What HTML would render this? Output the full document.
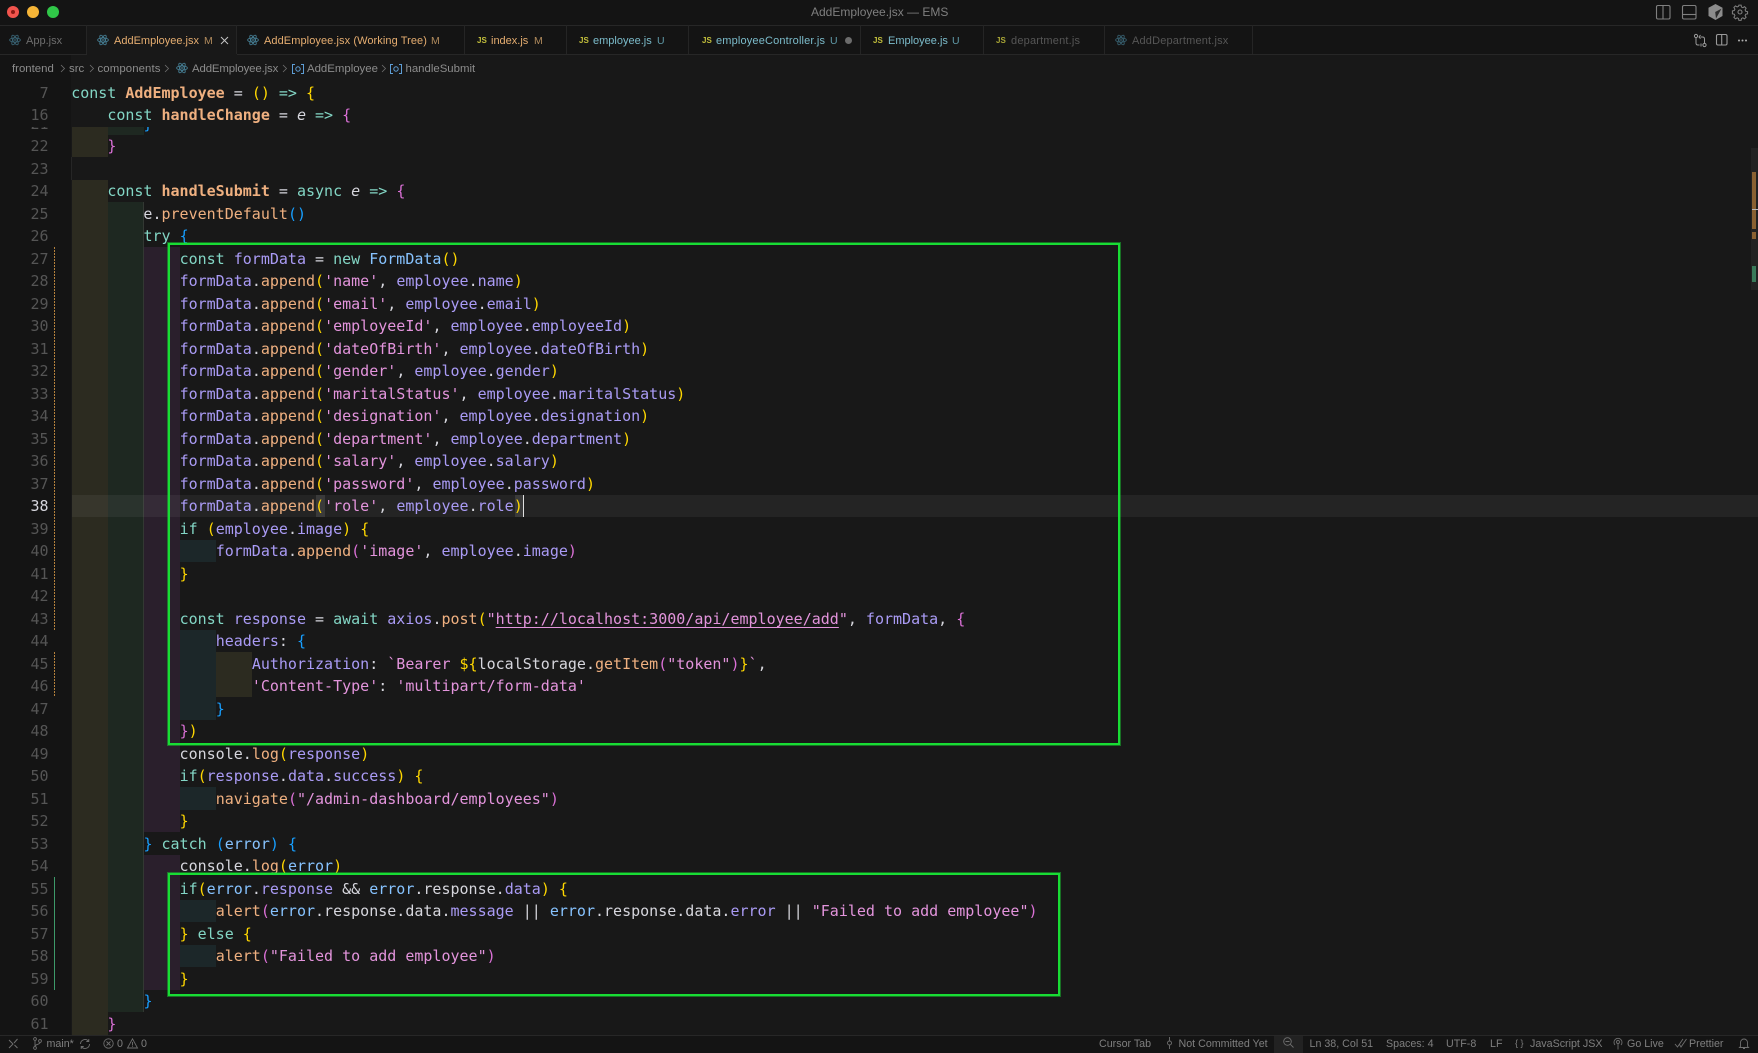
<!DOCTYPE html>
<html><head><meta charset="utf-8"><title>AddEmployee.jsx — EMS</title>
<style>
html,body{margin:0;padding:0;background:#181818;width:1758px;height:1053px;overflow:hidden}
#a{position:relative;width:1758px;height:1053px;overflow:hidden;background:#181818;font-family:"Liberation Sans",sans-serif;filter:blur(.3px)}
.r{position:absolute}
.u{position:absolute;white-space:pre;font-family:"Liberation Sans",sans-serif}
pre{margin:0;position:absolute;font-family:"DejaVu Sans Mono","Liberation Mono",monospace;font-size:15px;line-height:22.5px;color:#d6d6dd}
.k{color:#83d6c5}.f{color:#efb080}.g{color:#efb080;font-weight:700}.s{color:#e394dc}.v{color:#aa9bf5}.t{color:#87c3ff}.y{color:#ffd700}.p{color:#da70d6}.b{color:#179fff}.i{font-style:italic}
.tab{font-size:11px;top:34px;line-height:14px}
.o{color:#e5ad70}.c{color:#7cbccb}.d{color:#565656}.h{color:#6e6e6e}
.js{position:absolute;top:35px;font-size:8px;line-height:11px;font-weight:700;color:#c4c03c}
.bc{font-size:11.4px;top:62px;line-height:14px;color:#8c8c8c}
.st{font-size:10.7px;top:1037px;line-height:14px;color:#7f7f7f}
.sep{position:absolute;top:25px;width:1px;height:29px;background:#252525}
svg{position:absolute;overflow:visible}
</style></head><body><div id="a">

<!-- chrome -->
<div class="r" style="left:0;top:0;width:1758px;height:54px;background:#141414"></div>
<div class="r" style="left:0;top:25px;width:1758px;height:1px;background:#272727"></div>
<div class="r" style="left:0;top:54px;width:1758px;height:1px;background:#272727"></div>
<div class="r" style="left:87px;top:26px;width:150px;height:29px;background:#181818"></div>
<div class="sep" style="left:86px"></div><div class="sep" style="left:236px"></div><div class="sep" style="left:464px"></div><div class="sep" style="left:566px"></div><div class="sep" style="left:688px"></div><div class="sep" style="left:860px"></div><div class="sep" style="left:983px"></div><div class="sep" style="left:1104px"></div><div class="sep" style="left:1252px"></div>

<!-- traffic lights -->
<div class="r" style="left:7px;top:6px;width:12px;height:12px;border-radius:50%;background:#f2544d"></div>
<div class="r" style="left:11px;top:10px;width:4px;height:4px;border-radius:50%;background:#8c1a14"></div>
<div class="r" style="left:27px;top:6px;width:12px;height:12px;border-radius:50%;background:#f6b537"></div>
<div class="r" style="left:47px;top:6px;width:12px;height:12px;border-radius:50%;background:#30c748"></div>

<div class="u" style="left:811px;top:5px;font-size:12px;line-height:14px;color:#7f7f7f">AddEmployee.jsx — EMS</div>

<!-- title icons -->
<svg style="left:1656px;top:5px" width="15" height="15" fill="none" stroke="#808080" stroke-width="1.1"><rect x=".5" y=".5" width="13.5" height="13.5" rx="1.5"/><path d="M7 .5V14"/></svg>
<svg style="left:1682px;top:5px" width="15" height="15" fill="none" stroke="#808080" stroke-width="1.1"><rect x=".5" y=".5" width="13.5" height="13.5" rx="1.5"/><path d="M.5 9.5H14"/></svg>
<svg style="left:1708px;top:4px" width="15" height="16"><path d="M7.5 0L14.5 3.8V12L7.5 16L.5 12V3.8Z" fill="#8c8c8c"/><path d="M13.5 4.6L7.2 8L8 14.5Z" fill="#2c2c2c"/></svg>
<svg style="left:1732px;top:4px" width="16" height="16" viewBox="0 0 16 16" fill="none" stroke="#808080" stroke-width="1.1"><circle cx="8" cy="8" r="2"/><path d="M6.8 .6h2.4l.4 2 1.5.7 1.8-1.1 1.7 1.7-1.1 1.8.7 1.5 2 .4v2.4l-2 .4-.7 1.5 1.1 1.8-1.7 1.7-1.8-1.1-1.5.7-.4 2H6.8l-.4-2-1.5-.7-1.8 1.1-1.7-1.7 1.1-1.8-.7-1.5-2-.4V6.8l2-.4.7-1.5-1.1-1.8 1.7-1.7 1.8 1.1 1.5-.7z" transform="translate(.6 .6) scale(.925)"/></svg>

<!-- editor actions -->
<svg style="left:1694px;top:34px" width="13" height="14" fill="none" stroke="#9a9a9a" stroke-width="1"><circle cx="2" cy="2" r="1.6"/><circle cx="10.5" cy="11" r="1.6"/><path d="M2 3.6V9c0 1.5.8 2 2 2h1.5M10.5 9.4V5c0-1.5-.8-2-2-2H6.5M6.5 1L5 3l1.5 1.6M7 9.5V12.5"/></svg>
<svg style="left:1716px;top:34px" width="12" height="12" fill="none" stroke="#9a9a9a" stroke-width="1.1"><rect x=".5" y=".5" width="10.5" height="10.5" rx="1.5"/><path d="M5.7.5V11"/></svg>
<svg style="left:1738px;top:39px" width="10" height="3" fill="#b0b0b0"><circle cx="1" cy="1.5" r="1"/><circle cx="4.5" cy="1.5" r="1"/><circle cx="8" cy="1.5" r="1"/></svg>

<svg width="0" height="0" style="position:absolute"><defs><g id="at" fill="none" stroke="#467f95" stroke-width=".85"><ellipse cx="6" cy="6" rx="5.4" ry="2.1"/><ellipse cx="6" cy="6" rx="5.4" ry="2.1" transform="rotate(60 6 6)"/><ellipse cx="6" cy="6" rx="5.4" ry="2.1" transform="rotate(120 6 6)"/><circle cx="6" cy="6" r=".9" fill="#467f95" stroke="none"/></g></defs></svg>

<!-- tabs -->
<svg style="left:9px;top:34px" width="12" height="12" opacity=".75"><use href="#at"/></svg>
<div class="u tab h" style="left:26px">App.jsx</div>
<svg style="left:97px;top:34px" width="12" height="12"><use href="#at"/></svg>
<div class="u tab o" style="left:114px">AddEmployee.jsx</div><div class="u tab" style="left:204px;font-size:10.5px;color:#b08a5c">M</div>
<svg style="left:220px;top:36px" width="9" height="9" fill="none" stroke="#c4c4c4" stroke-width="1"><path d="M1 1L8 8M8 1L1 8"/></svg>
<svg style="left:247px;top:34px" width="12" height="12"><use href="#at"/></svg>
<div class="u tab o" style="left:264px;letter-spacing:.08px">AddEmployee.jsx (Working Tree)</div><div class="u tab" style="left:431px;font-size:10.5px;color:#b08a5c">M</div>
<div class="js" style="left:477px">JS</div>
<div class="u tab o" style="left:491px">index.js</div><div class="u tab" style="left:534px;font-size:10.5px;color:#b08a5c">M</div>
<div class="js" style="left:579px">JS</div>
<div class="u tab c" style="left:593px">employee.js</div><div class="u tab" style="left:657px;font-size:10.5px;color:#5f9aa8">U</div>
<div class="js" style="left:702px">JS</div>
<div class="u tab c" style="left:716px;letter-spacing:.16px">employeeController.js</div><div class="u tab" style="left:830px;font-size:10.5px;color:#5f9aa8">U</div>
<div class="r" style="left:845px;top:37px;width:7px;height:7px;border-radius:50%;background:#6c6c6c"></div>
<div class="js" style="left:873px">JS</div>
<div class="u tab c" style="left:888px">Employee.js</div><div class="u tab" style="left:952px;font-size:10.5px;color:#5f9aa8">U</div>
<div class="js" style="left:996px;opacity:.85">JS</div>
<div class="u tab d" style="left:1011px;letter-spacing:.2px">department.js</div>
<svg style="left:1115px;top:34px" width="12" height="12" opacity=".7"><use href="#at"/></svg>
<div class="u tab d" style="left:1132px;letter-spacing:.17px">AddDepartment.jsx</div>

<!-- editor bgs -->
<div class="r" style="left:0;top:55px;width:71px;height:980px;background:#141414"></div>
<div class="r" style="left:71.5px;top:126px;width:36px;height:31.25px;background:#2c2b20"></div>
<div class="r" style="left:71.5px;top:179.75px;width:36px;height:855px;background:#2c2b20"></div>
<div class="r" style="left:107.5px;top:126px;width:36px;height:8.75px;background:#1e2821"></div>
<div class="r" style="left:107.5px;top:202.25px;width:36px;height:810px;background:#1e2821"></div>
<div class="r" style="left:143.5px;top:247.25px;width:36px;height:585px;background:#2a1f2c"></div>
<div class="r" style="left:143.5px;top:854.75px;width:36px;height:135px;background:#2a1f2c"></div>
<div class="r" style="left:179.5px;top:539.75px;width:36px;height:22.5px;background:#1c2729"></div>
<div class="r" style="left:179.5px;top:629.75px;width:36px;height:90px;background:#1c2729"></div>
<div class="r" style="left:179.5px;top:787.25px;width:36px;height:22.5px;background:#1c2729"></div>
<div class="r" style="left:179.5px;top:899.75px;width:36px;height:22.5px;background:#1c2729"></div>
<div class="r" style="left:179.5px;top:944.75px;width:36px;height:22.5px;background:#1c2729"></div>
<div class="r" style="left:215.5px;top:652.25px;width:36px;height:45px;background:#2c2b20"></div>
<div class="r" style="left:71px;top:157px;width:1px;height:23px;background:#262626"></div>
<div class="r" style="left:143px;top:202.25px;width:1px;height:810px;background:#333833"></div>

<!-- current line -->
<div class="r" style="left:71.5px;top:494.75px;width:1687px;height:22.5px;background:rgba(255,255,255,.055)"></div>
<div class="r" style="left:315.5px;top:494.75px;width:9px;height:22.5px;background:#3a3a3a"></div>
<div class="r" style="left:514.5px;top:494.75px;width:9px;height:22.5px;background:#3a3a3a"></div>

<!-- git gutter -->
<div class="r" style="left:53.5px;top:247.25px;width:1px;height:382.5px;background:repeating-linear-gradient(#b5813c 0 2px,transparent 2px 3px)"></div>
<div class="r" style="left:53.5px;top:652.25px;width:1px;height:45px;background:repeating-linear-gradient(#b5813c 0 2px,transparent 2px 3px)"></div>
<div class="r" style="left:53.5px;top:877.25px;width:1.5px;height:112.5px;background:#3d9a6a"></div>

<!-- line numbers -->
<pre style="left:0;width:48.6px;top:112.65px;text-align:right;color:#555">21
22
23
24
25
26
27
28
29
30
31
32
33
34
35
36
37
<span style="color:#d6d6dd">38</span>
39
40
41
42
43
44
45
46
47
48
49
50
51
52
53
54
55
56
57
58
59
60
61</pre>

<!-- code -->
<pre style="left:71.2px;top:112.65px">        <span class="b">}</span>
    <span class="p">}</span>

    <span class="k">const</span> <span class="g">handleSubmit</span> = <span class="k">async</span> <span class="i">e</span> <span class="k">=&gt;</span> <span class="p">{</span>
        e.<span class="f">preventDefault</span><span class="b">()</span>
        <span class="k">try</span> <span class="b">{</span>
            <span class="k">const</span> <span class="v">formData</span> = <span class="k">new</span> <span class="t">FormData</span><span class="y">()</span>
            <span class="v">formData</span>.<span class="f">append</span><span class="y">(</span><span class="s">'name'</span>, <span class="v">employee</span>.<span class="v">name</span><span class="y">)</span>
            <span class="v">formData</span>.<span class="f">append</span><span class="y">(</span><span class="s">'email'</span>, <span class="v">employee</span>.<span class="v">email</span><span class="y">)</span>
            <span class="v">formData</span>.<span class="f">append</span><span class="y">(</span><span class="s">'employeeId'</span>, <span class="v">employee</span>.<span class="v">employeeId</span><span class="y">)</span>
            <span class="v">formData</span>.<span class="f">append</span><span class="y">(</span><span class="s">'dateOfBirth'</span>, <span class="v">employee</span>.<span class="v">dateOfBirth</span><span class="y">)</span>
            <span class="v">formData</span>.<span class="f">append</span><span class="y">(</span><span class="s">'gender'</span>, <span class="v">employee</span>.<span class="v">gender</span><span class="y">)</span>
            <span class="v">formData</span>.<span class="f">append</span><span class="y">(</span><span class="s">'maritalStatus'</span>, <span class="v">employee</span>.<span class="v">maritalStatus</span><span class="y">)</span>
            <span class="v">formData</span>.<span class="f">append</span><span class="y">(</span><span class="s">'designation'</span>, <span class="v">employee</span>.<span class="v">designation</span><span class="y">)</span>
            <span class="v">formData</span>.<span class="f">append</span><span class="y">(</span><span class="s">'department'</span>, <span class="v">employee</span>.<span class="v">department</span><span class="y">)</span>
            <span class="v">formData</span>.<span class="f">append</span><span class="y">(</span><span class="s">'salary'</span>, <span class="v">employee</span>.<span class="v">salary</span><span class="y">)</span>
            <span class="v">formData</span>.<span class="f">append</span><span class="y">(</span><span class="s">'password'</span>, <span class="v">employee</span>.<span class="v">password</span><span class="y">)</span>
            <span class="v">formData</span>.<span class="f">append</span><span class="y">(</span><span class="s">'role'</span>, <span class="v">employee</span>.<span class="v">role</span><span class="y">)</span>
            <span class="k">if</span> <span class="y">(</span><span class="v">employee</span>.<span class="v">image</span><span class="y">)</span> <span class="y">{</span>
                <span class="v">formData</span>.<span class="f">append</span><span class="p">(</span><span class="s">'image'</span>, <span class="v">employee</span>.<span class="v">image</span><span class="p">)</span>
            <span class="y">}</span>

            <span class="k">const</span> <span class="v">response</span> = <span class="k">await</span> <span class="v">axios</span>.<span class="f">post</span><span class="y">(</span><span class="s">"<span style="text-decoration:underline;text-underline-offset:3px">http://localhost:3000/api/employee/add</span>"</span>, <span class="v">formData</span>, <span class="p">{</span>
                <span class="v">headers</span>: <span class="b">{</span>
                    <span class="v">Authorization</span>: <span class="s">`Bearer </span><span class="y">${</span>localStorage.<span class="f">getItem</span><span class="p">(</span><span class="s">"token"</span><span class="p">)</span><span class="y">}</span><span class="s">`</span>,
                    <span class="s">'Content-Type'</span>: <span class="s">'multipart/form-data'</span>
                <span class="b">}</span>
            <span class="p">}</span><span class="y">)</span>
            console.<span class="f">log</span><span class="y">(</span><span class="v">response</span><span class="y">)</span>
            <span class="k">if</span><span class="y">(</span><span class="v">response</span>.<span class="v">data</span>.<span class="v">success</span><span class="y">)</span> <span class="y">{</span>
                <span class="f">navigate</span><span class="p">(</span><span class="s">"/admin-dashboard/employees"</span><span class="p">)</span>
            <span class="y">}</span>
        <span class="b">}</span> <span class="k">catch</span> <span class="b">(</span><span class="t">error</span><span class="b">)</span> <span class="b">{</span>
            console.<span class="f">log</span><span class="y">(</span><span class="t">error</span><span class="y">)</span>
            <span class="k">if</span><span class="y">(</span><span class="t">error</span>.<span class="v">response</span> &amp;&amp; <span class="t">error</span>.response.<span class="v">data</span><span class="y">)</span> <span class="y">{</span>
                <span class="f">alert</span><span class="p">(</span><span class="t">error</span>.response.data.<span class="v">message</span> || <span class="t">error</span>.response.data.<span class="v">error</span> || <span class="s">"Failed to add employee"</span><span class="p">)</span>
            <span class="y">}</span> <span class="k">else</span> <span class="y">{</span>
                <span class="f">alert</span><span class="p">(</span><span class="s">"Failed to add employee"</span><span class="p">)</span>
            <span class="y">}</span>
        <span class="b">}</span>
    <span class="p">}</span></pre>

<!-- cursor -->
<div class="r" style="left:523px;top:495px;width:1px;height:22px;background:#e0e0e0"></div>

<!-- sticky -->
<div class="r" style="left:0;top:55px;width:71px;height:71.5px;background:#141414"></div>
<div class="r" style="left:71px;top:55px;width:1687px;height:71.5px;background:#181818"></div>
<pre style="left:0;width:48.6px;top:81.5px;text-align:right;color:#555;line-height:22.4px">7
16</pre>
<pre style="left:71.2px;top:81.5px;line-height:22.4px"><span class="k">const</span> <span class="g">AddEmployee</span> = <span class="y">()</span> <span class="k">=&gt;</span> <span class="y">{</span>
    <span class="k">const</span> <span class="g">handleChange</span> = <span class="i">e</span> <span class="k">=&gt;</span> <span class="p">{</span></pre>

<!-- breadcrumb -->
<div class="u bc" style="left:12px">frontend</div><div class="u bc" style="left:69px">src</div><div class="u bc" style="left:97.5px;letter-spacing:.1px">components</div>
<svg style="left:176px;top:62px" width="12" height="12"><use href="#at"/></svg>
<div class="u bc" style="left:192px;letter-spacing:-.12px">AddEmployee.jsx</div><div class="u bc" style="left:307px">AddEmployee</div><div class="u bc" style="left:405.5px">handleSubmit</div>
<svg style="left:61px;top:65px" width="430" height="8" fill="none" stroke="#707070" stroke-width=".8"><path d="M0 0L3.5 3.5L0 7M29 0L32.5 3.5L29 7M104 0L107.5 3.5L104 7M222 0L225.5 3.5L222 7M321 0L324.5 3.5L321 7"/></svg>
<svg style="left:292px;top:64px" width="12" height="10" fill="none" stroke="#5e9ed6" stroke-width="1"><path d="M3 .5H.5V9.5H3M9 .5H11.5V9.5H9"/><circle cx="6" cy="5" r="2.2"/></svg>
<svg style="left:390px;top:64px" width="12" height="10" fill="none" stroke="#5e9ed6" stroke-width="1"><path d="M3 .5H.5V9.5H3M9 .5H11.5V9.5H9"/><circle cx="6" cy="5" r="2.2"/></svg>

<!-- green boxes -->
<div class="r" style="box-sizing:border-box;left:168px;top:243px;width:952px;height:502px;border:2px solid #18dc34;box-shadow:0 0 0 1px rgba(24,220,52,.45)"></div>
<div class="r" style="box-sizing:border-box;left:168px;top:873px;width:892px;height:123px;border:2px solid #18dc34;box-shadow:0 0 0 1px rgba(24,220,52,.45)"></div>

<!-- overview ruler -->
<div class="r" style="left:1751px;top:148px;width:7px;height:142px;background:#222"></div>
<div class="r" style="left:1752px;top:172px;width:3.5px;height:57px;background:#8a6132"></div>
<div class="r" style="left:1752px;top:232px;width:3.5px;height:7px;background:#8a6132"></div>
<div class="r" style="left:1752px;top:266px;width:3.5px;height:16px;background:#3a7a5a"></div>
<div class="r" style="left:1752px;top:209px;width:6px;height:1px;background:#bbb"></div>

<!-- status bar -->
<div class="r" style="left:0;top:1035px;width:1758px;height:18px;background:#141414;border-top:1px solid #272727;box-sizing:border-box"></div>
<div class="r" style="left:1274px;top:1036px;width:29px;height:17px;background:#222"></div>
<svg style="left:9px;top:1039px" width="9" height="10" fill="none" stroke="#6f6f6f" stroke-width="1"><path d="M0 9L4 5L0 1M8.5 0L5 4M5.5 6L8.5 9"/></svg>
<svg style="left:33px;top:1037px" width="9" height="13" fill="none" stroke="#6f6f6f" stroke-width=".9"><circle cx="2" cy="2" r="1.4"/><circle cx="2" cy="11" r="1.4"/><circle cx="7" cy="4" r="1.4"/><path d="M2 3.5V9.5M7 5.5C7 7.5 3 7 2 9"/></svg>
<div class="u st" style="left:46.5px">main*</div>
<svg style="left:79px;top:1038px" width="12" height="12" fill="none" stroke="#6f6f6f" stroke-width=".9"><path d="M1.5 6a4.5 4.5 0 0 1 8-2.8M10.5 6a4.5 4.5 0 0 1-8 2.8M9.8 1V3.5H7.3M2.2 11V8.5H4.7"/></svg>
<svg style="left:103px;top:1038px" width="11" height="11" fill="none" stroke="#6f6f6f" stroke-width=".9"><circle cx="5.5" cy="5.5" r="4.7"/><path d="M3.5 3.5L7.5 7.5M7.5 3.5L3.5 7.5"/></svg>
<div class="u st" style="left:117px">0</div>
<svg style="left:127px;top:1038px" width="11" height="11" fill="none" stroke="#6f6f6f" stroke-width=".9"><path d="M5.5 .8L10.5 10H.5ZM5.5 4V7.5M5.5 8.3V9"/></svg>
<div class="u st" style="left:141px">0</div>
<div class="u st" style="left:1099px">Cursor Tab</div>
<svg style="left:1166px;top:1037px" width="7" height="13" fill="none" stroke="#6f6f6f" stroke-width=".9"><circle cx="3.5" cy="6" r="2"/><path d="M3.5 0V4M3.5 8V12"/></svg>
<div class="u st" style="left:1178.5px">Not Committed Yet</div>
<svg style="left:1283px;top:1037px" width="11" height="11" fill="none" stroke="#6f6f6f" stroke-width=".9"><circle cx="4.5" cy="4.5" r="3.8"/><path d="M7.3 7.3L10.5 10.5M2.5 4.5H6.5"/></svg>
<div class="u st" style="left:1309.5px">Ln 38, Col 51</div>
<div class="u st" style="left:1386px">Spaces: 4</div>
<div class="u st" style="left:1446px">UTF-8</div>
<div class="u st" style="left:1490px">LF</div>
<div class="u st" style="left:1515px;font-size:9px;top:1036px">{ }</div>
<div class="u st" style="left:1530px">JavaScript JSX</div>
<svg style="left:1613px;top:1038px" width="10" height="12" fill="none" stroke="#6f6f6f" stroke-width=".9"><circle cx="5" cy="4" r="1.5"/><path d="M2 7A4 4 0 1 1 8 7M5 6V11.5"/></svg>
<div class="u st" style="left:1627px">Go Live</div>
<svg style="left:1675px;top:1039px" width="12" height="9" fill="none" stroke="#6f6f6f" stroke-width=".9"><path d="M0 5L2.5 8L8 0M4.5 5.5L6 8L11.5 0"/></svg>
<div class="u st" style="left:1689px">Prettier</div>
<svg style="left:1739px;top:1038px" width="10" height="12" fill="none" stroke="#6f6f6f" stroke-width=".9"><path d="M1.5 8.5V4.5a3.5 3.5 0 0 1 7 0V8.5L9.5 9.5H.5ZM4 10.5H6"/></svg>

</div></body></html>
